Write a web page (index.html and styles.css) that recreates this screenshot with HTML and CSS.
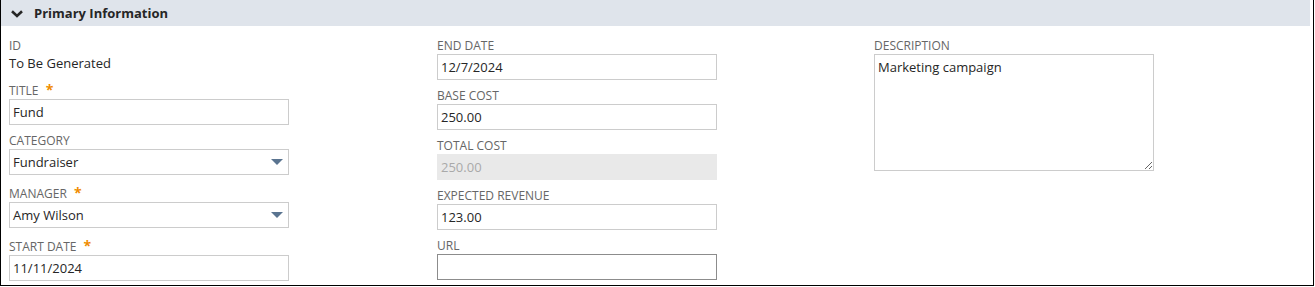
FILE: index.html
```html
<!DOCTYPE html>
<html lang="en">
<head>
<meta charset="utf-8">
<title>Primary Information</title>
<link rel="stylesheet" href="styles.css">
</head>
<body>
<div class="panel">
  <div class="panel-header">
    <svg class="chevron" width="12" height="8" viewBox="0 0 12 8"><path d="M1 1.3 L6 6 L11 1.3" fill="none" stroke="#262626" stroke-width="2.6"/></svg>
    <span class="panel-title">Primary Information</span>
  </div>
  <div class="panel-body">
    <div class="col">
      <div class="field field-id">
        <div class="label">ID</div>
        <div class="value">To Be Generated</div>
      </div>
      <div class="field">
        <div class="label">Title <span class="req">*</span></div>
        <div class="control">Fund</div>
      </div>
      <div class="field field-select">
        <div class="label">Category</div>
        <div class="control select">Fundraiser<span class="arrow"></span></div>
      </div>
      <div class="field field-select">
        <div class="label">Manager <span class="req">*</span></div>
        <div class="control select">Amy Wilson<span class="arrow"></span></div>
      </div>
      <div class="field">
        <div class="label">Start Date <span class="req">*</span></div>
        <div class="control">11/11/2024</div>
      </div>
    </div>
    <div class="col">
      <div class="field">
        <div class="label">End Date</div>
        <div class="control">12/7/2024</div>
      </div>
      <div class="field">
        <div class="label">Base Cost</div>
        <div class="control">250.00</div>
      </div>
      <div class="field">
        <div class="label">Total Cost</div>
        <div class="control disabled">250.00</div>
      </div>
      <div class="field">
        <div class="label">Expected Revenue</div>
        <div class="control">123.00</div>
      </div>
      <div class="field">
        <div class="label">URL</div>
        <div class="control focus"></div>
      </div>
    </div>
    <div class="col">
      <div class="field">
        <div class="label">Description</div>
        <textarea class="textarea" readonly>Marketing campaign</textarea>
      </div>
    </div>
  </div>
</div>
</body>
</html>
```
FILE: styles.css
```css
html, body {
  margin: 0;
  padding: 0;
  background: #ffffff;
}
body {
  font-family: "Open Sans", "Liberation Sans", sans-serif;
  color: #262626;
}
.panel {
  width: 1312px;
  height: 285px;
  border-left: 1px solid #000;
  border-right: 1px solid #000;
  border-bottom: 1px solid #000;
  overflow: hidden;
}
.panel-header {
  height: 26px;
  margin-right: 3px;
  background: #dfe4eb;
  display: flex;
  align-items: center;
  padding-left: 10px;
}
.chevron {
  display: block;
  margin-top: 1px;
}
.panel-title {
  margin-left: 11px;
  font-size: 13px;
  font-weight: 700;
  color: #262626;
  line-height: 18px;
}
.panel-body {
  display: grid;
  grid-template-columns: 428px 437px 1fr;
  padding: 13px 0 0 8px;
}
.col {
  display: flex;
  flex-direction: column;
}
.field {
  margin-bottom: 9px;
}
.field-id {
  margin-bottom: 12px;
}
.field-select {
  margin-bottom: 12px;
}
.label {
  height: 14px;
  margin-bottom: 1px;
  font-size: 12px;
  line-height: 14px;
  color: #666666;
  text-transform: uppercase;
  white-space: nowrap;
}
.req {
  color: #f08c00;
  font-size: 14px;
  font-weight: 700;
  line-height: 0;
  margin-left: 4px;
}
.value {
  font-size: 13px;
  line-height: 18px;
  color: #262626;
}
.control {
  position: relative;
  box-sizing: border-box;
  width: 280px;
  height: 26px;
  border: 1px solid #cccccc;
  padding: 0 3px;
  font-size: 13px;
  line-height: 24px;
  color: #262626;
  background: #fff;
}
.control.disabled {
  background: #e9e9e9;
  border-color: #e9e9e9;
  color: #a9a9a9;
}
.control.focus {
  border-color: #8c8c8c;
}
.arrow {
  position: absolute;
  right: 5px;
  top: 9px;
  width: 0;
  height: 0;
  border-left: 6px solid transparent;
  border-right: 6px solid transparent;
  border-top: 6px solid #5a7490;
}
.textarea {
  display: block;
  box-sizing: border-box;
  width: 280px;
  height: 117px;
  margin: 0;
  border: 1px solid #cccccc;
  padding: 3px 3px;
  font-family: "Open Sans", "Liberation Sans", sans-serif;
  font-size: 13px;
  line-height: 18px;
  color: #262626;
  resize: both;
  outline: none;
}
```
